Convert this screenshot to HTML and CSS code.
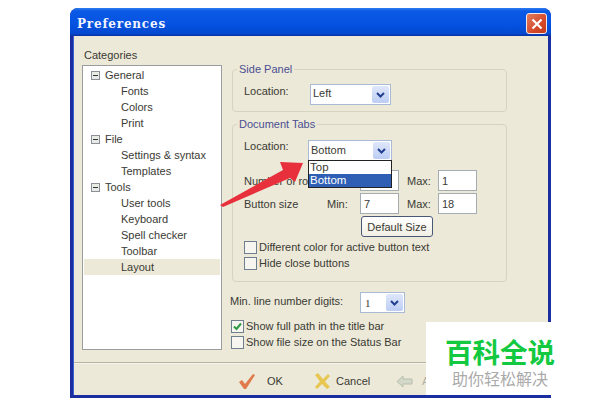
FILE: index.html
```html
<!DOCTYPE html>
<html lang="en">
<head>
<meta charset="utf-8">
<title>Preferences</title>
<link rel="stylesheet" href="styles.css">
</head>
<body>
<div class="window">
  <header class="titlebar">
    <span class="title">Preferences</span>
    <button class="close" aria-label="Close"><svg width="12" height="12" viewBox="0 0 12 12"><path d="M1.5 1.500 10.500 10.500M10.500 1.500 1.500 10.500" stroke="#fff" stroke-width="2.2" fill="none"/></svg></button>
  </header>
  <div class="client">
    <main class="main">
      <section class="left">
        <div class="cat-label">Categories</div>
        <ul class="tree">
          <li class="node"><i class="exp"></i>General</li>
          <li class="leaf">Fonts</li>
          <li class="leaf">Colors</li>
          <li class="leaf">Print</li>
          <li class="node"><i class="exp"></i>File</li>
          <li class="leaf">Settings &amp; syntax</li>
          <li class="leaf">Templates</li>
          <li class="node"><i class="exp"></i>Tools</li>
          <li class="leaf">User tools</li>
          <li class="leaf">Keyboard</li>
          <li class="leaf">Spell checker</li>
          <li class="leaf">Toolbar</li>
          <li class="leaf selected">Layout</li>
        </ul>
      </section>
      <section class="right">
        <fieldset class="group side">
          <legend>Side Panel</legend>
          <div class="row">
            <span class="lbl lbl-loc">Location:</span>
            <div class="select sel-side">Left<i class="drop"><svg width="9" height="6" viewBox="0 0 9 6"><path d="M1 1 4.500 4.500 8 1" stroke="#23408f" stroke-width="2" fill="none"/></svg></i></div>
          </div>
        </fieldset>
        <fieldset class="group doc">
          <legend>Document Tabs</legend>
          <div class="row row-loc">
            <span class="lbl lbl-loc">Location:</span>
            <div class="select sel-doc">Bottom<i class="drop"><svg width="9" height="6" viewBox="0 0 9 6"><path d="M1 1 4.500 4.500 8 1" stroke="#23408f" stroke-width="2" fill="none"/></svg></i>
              <ul class="droplist">
                <li>Top</li>
                <li class="on">Bottom</li>
              </ul>
            </div>
          </div>
          <div class="row row-num">
            <span class="lbl lbl-wide">Number of rows</span>
            <span class="input"></span>
            <span class="lbl lbl-max">Max:</span>
            <span class="input">1</span>
          </div>
          <div class="row row-btn">
            <span class="lbl lbl-size">Button size</span>
            <span class="lbl lbl-min">Min:</span>
            <span class="input">7</span>
            <span class="lbl lbl-max">Max:</span>
            <span class="input">18</span>
          </div>
          <button class="default">Default Size</button>
          <label class="check"><i class="box"></i>Different color for active button text</label>
          <label class="check"><i class="box"></i>Hide close buttons</label>
        </fieldset>
        <div class="row row-digits">
          <span class="lbl lbl-digits">Min. line number digits:</span>
          <div class="select sel-digits">1<i class="drop"><svg width="9" height="6" viewBox="0 0 9 6"><path d="M1 1 4.500 4.500 8 1" stroke="#23408f" stroke-width="2" fill="none"/></svg></i></div>
        </div>
        <label class="check check-outer"><i class="box"><svg width="11" height="11" viewBox="0 0 11 11"><path d="M2 5.500 4.500 8 9 2.500" stroke="#2f9a45" stroke-width="2" fill="none"/></svg></i>Show full path in the title bar</label>
        <label class="check check-outer"><i class="box"></i>Show file size on the Status Bar</label>
      </section>
    </main>
    <footer class="footer">
      <span class="action act-ok"><svg width="18" height="17" viewBox="0 0 18 17"><path d="M1 9 4 7 7 11 15 1 17 2 8 16 6 16Z" fill="#e07a4a"/></svg><span>OK</span></span>
      <span class="action act-cancel"><svg width="17" height="17" viewBox="0 0 17 17"><path d="M1 2 4 0 9 6 14 1 16 3 11 8.500 16 14 13 16 8 11 3 16 1 14 6 8.500Z" fill="#e8c652"/></svg><span>Cancel</span></span>
      <span class="action act-apply"><svg width="17" height="13" viewBox="0 0 17 13"><path d="M1 6.500 7 1V4H16V9H7V12Z" fill="#d3d8c8" stroke="#b7bfae"/></svg><span>Apply</span></span>
    </footer>
  </div>
</div>
<svg class="arrow" width="90" height="52" viewBox="0 0 90 52"><path d="M1 46 64 11 61 3 84 4 76 23 71 19 4 48Z" fill="#e8303c"/></svg>
<div class="mark">
  <div class="mark-main">百科全说</div>
  <div class="mark-sub">助你轻松解决</div>
</div>
</body>
</html>
```

FILE: styles.css
```css
* { box-sizing: border-box; }
html, body { margin: 0; padding: 0; }
body {
  position: relative;
  width: 602px;
  height: 420px;
  background: #fff;
  overflow: hidden;
  padding: 8px 0 0 70px;
  font: 11px/16px "Liberation Sans", Arial, sans-serif;
  color: #3a3a34;
}
ul { list-style: none; margin: 0; padding: 0; }
i { font-style: normal; }

.window {
  width: 481px;
  height: 390px;
  border-radius: 8px 8px 0 0;
  background: #1a2ea0;
  display: flex;
  flex-direction: column;
  overflow: hidden;
}
.titlebar {
  height: 28px;
  flex: none;
  display: flex;
  align-items: center;
  justify-content: space-between;
  padding: 3px 4px 0 7px;
  background: linear-gradient(#2f7cf0 0, #0a5ae6 3px, #0552e0 60%, #0348cf 92%, #0a2f9c 100%);
}
.title {
  font: bold 12px/16px "DejaVu Serif", serif;
  letter-spacing: 0.8px;
  color: #f2f4ff;
}
.close {
  width: 21px;
  height: 21px;
  padding: 0;
  border: 1px solid #f2e9e6;
  border-radius: 3px;
  background: linear-gradient(135deg, #e08060, #d6492a 60%, #c23a1c);
  display: flex;
  align-items: center;
  justify-content: center;
}
.client {
  flex: 1;
  margin: 0 3px 3px;
  background: #ece9d8;
  display: flex;
  flex-direction: column;
  border-left: 1px solid #3a5fd0;
}
.main {
  height: 326px;
  flex: none;
  display: flex;
  gap: 8px;
  padding: 11px 0 0 8px;
}
.left { width: 140px; flex: none; }
.cat-label { margin: 0 0 2px 2px; height: 16px; }
.tree {
  height: 285px;
  background: #fff;
  border: 1px solid #9a9c9e;
  padding: 1px;
}
.tree li { height: 16px; display: flex; align-items: center; }
.node { padding-left: 7px; }
.leaf { padding-left: 37px; }
.selected { background: #ece9d8; }
.exp {
  position: relative;
  width: 9px;
  height: 9px;
  margin-right: 5px;
  border: 1px solid #8a8f98;
  background: #e9ebe6;
}
.exp::after {
  content: "";
  position: absolute;
  left: 1px;
  right: 1px;
  top: 3px;
  height: 1px;
  background: #333;
}
.right { width: 278px; flex: none; padding-top: 15px; }
.group {
  margin: 0 0 0 2px;
  padding: 0 0 0 11px;
  width: 275px;
  border: 1px solid #d6d3c0;
  border-radius: 4px;
  min-width: 0;
}
.group legend {
  padding: 0 2px;
  margin-left: -7px;
  line-height: 14px;
  color: #4a4f92;
}
.side { height: 50px; }
.doc { height: 165px; margin-top: 5px; }
.row { display: flex; align-items: center; }
.side .row { height: 21px; margin-top: 8px; }
.lbl { display: block; flex: none; }
.lbl-loc { width: 66px; margin-bottom: 7px; }
.row-loc .lbl-loc { margin-bottom: 9px; }
.select {
  position: relative;
  height: 21px;
  padding: 1px 0 0 2px;
  background: #fff;
  border: 1px solid #a9bad6;
  flex: none;
}
.sel-side { width: 81px; padding-top: 0; }
.sel-doc { width: 84px; margin-left: -2px; }
.sel-digits { width: 45px; padding: 2px 0 0 4px; font-family: "Liberation Serif", serif; }
.drop {
  position: absolute;
  right: 1px;
  top: 1px;
  bottom: 1px;
  width: 17px;
  border-radius: 2px;
  background: linear-gradient(#dfe7fa, #bccdf4);
  display: flex;
  align-items: center;
  justify-content: center;
}
.droplist {
  position: absolute;
  z-index: 3;
  left: -1px;
  top: 19px;
  width: 84px;
  height: 28px;
  background: #fff;
  border: 1px solid #222;
  line-height: 13px;
}
.droplist li { height: 13px; padding-left: 1px; font-size: 11.5px; }
.droplist .on { background: #2f5fb5; color: #fff; }
.row-loc { height: 21px; margin-top: 9px; }
.row-num { height: 21px; margin-top: 9px; }
.row-btn { height: 21px; margin-top: 2px; }
.input {
  width: 39px;
  height: 21px;
  flex: none;
  padding: 2px 0 0 3px;
  background: #fff;
  border: 1px solid #a5acb2;
}
.lbl-wide { width: 116px; }
.lbl-size { width: 83px; }
.lbl-min { width: 33px; }
.lbl-max { width: 39px; padding-left: 8px; }
.default {
  display: block;
  width: 72px;
  height: 21px;
  margin: 2px 0 2px 117px;
  padding: 0;
  font: inherit;
  color: inherit;
  background: linear-gradient(#fff, #f1efe4);
  border: 1px solid #4a5878;
  border-radius: 3px;
}
.check { display: flex; align-items: center; height: 16px; }
.check-outer { margin-left: 1px; }
.box {
  width: 13px;
  height: 13px;
  margin-right: 2px;
  flex: none;
  background: #f6f5ef;
  border: 1px solid #6f7f90;
  display: flex;
  align-items: center;
  justify-content: center;
}
.row-digits { height: 21px; margin-top: 10px; margin-bottom: 5px; }
.lbl-digits { width: 130px; margin-bottom: 3px; }
.footer {
  flex: 1;
  border-top: 1px solid #b4b2a4;
  box-shadow: inset 0 1px 0 #f7f5ea;
  display: flex;
  align-items: center;
  padding: 4px 0 0 164px;
}
.action { display: flex; align-items: center; flex: none; }
.act-ok { width: 76px; gap: 11px; }
.act-cancel { width: 82px; gap: 5px; }
.act-apply { gap: 9px; color: #b0b0a4; }

.arrow { position: absolute; left: 219px; top: 159px; }
.mark {
  position: absolute;
  left: 426px;
  top: 322px;
  width: 153px;
  height: 73px;
  background: #fff;
  padding: 13px 0 0 19px;
  font-family: "Noto Sans CJK SC", sans-serif;
}
.mark-main {
  font-size: 27.5px;
  line-height: 32px;
  font-weight: 700;
  color: #13c93f;
  white-space: nowrap;
}
.mark-sub {
  font-size: 16px;
  line-height: 20px;
  color: #aaa;
  margin: 1px 0 0 7px;
  white-space: nowrap;
}
```
